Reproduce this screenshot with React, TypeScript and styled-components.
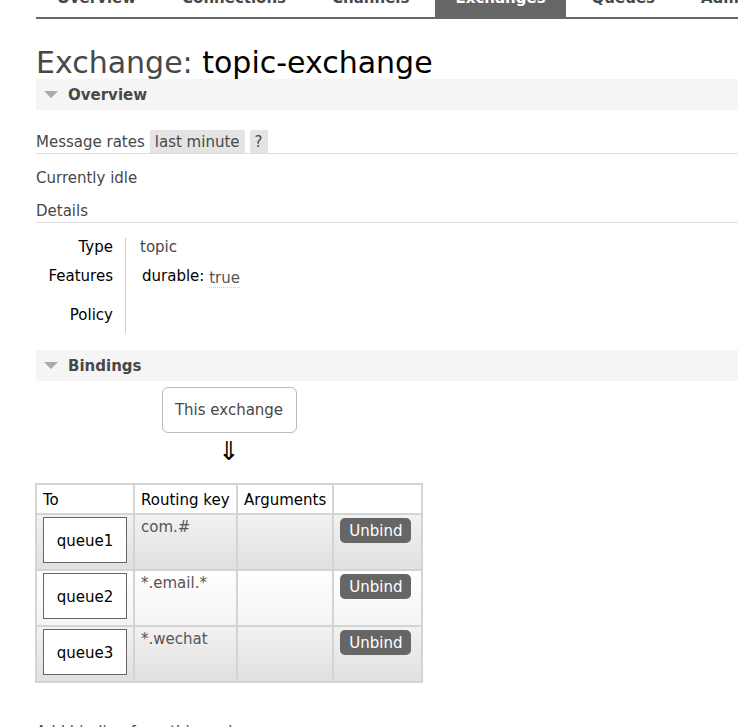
import styled, { createGlobalStyle } from "styled-components"

const GlobalStyle = createGlobalStyle`
  html, body {
    margin: 0;
    padding: 0;
    background: #fff;
  }
  body {
    font-family: "DejaVu Sans", Verdana, sans-serif;
    color: #484848;
    overflow: hidden;
  }
`

type Binding = {
    queue: string;
    routingKey: string;
}

const bindings: Binding[] = [
    { queue: "queue1", routingKey: "com.#" },
    { queue: "queue2", routingKey: "*.email.*" },
    { queue: "queue3", routingKey: "*.wechat" },
]

const tabs = ["Overview", "Connections", "Channels", "Exchanges", "Queues", "Admin"]

export default function App() {
    return (
        <>
            <GlobalStyle />
            <Page>
                <Menu>
                    {tabs.map((t) => (
                        <Tab key={t} $active={t === "Exchanges"}>{t}</Tab>
                    ))}
                </Menu>

                <Title>
                    Exchange: <b>topic-exchange</b>
                </Title>

                <SectionHeader>
                    <Caret />
                    Overview
                </SectionHeader>
                <SectionBody>
                    <SubHeading>
                        Message rates
                        <Pill>last minute</Pill>
                        <Pill>?</Pill>
                    </SubHeading>
                    <Idle>Currently idle</Idle>
                    <SubHeading $plain>Details</SubHeading>
                    <Facts>
                        <tbody>
                            <tr>
                                <FactLabel $h={18}>Type</FactLabel>
                                <FactValue $h={18}>topic</FactValue>
                            </tr>
                            <tr>
                                <FactLabel $h={40}>Features</FactLabel>
                                <FactValue $h={40}>
                                    <Feature>durable:</Feature> <Abbr>true</Abbr>
                                </FactValue>
                            </tr>
                            <tr>
                                <FactLabel $h={37}>Policy</FactLabel>
                                <FactValue $h={37}></FactValue>
                            </tr>
                        </tbody>
                    </Facts>
                </SectionBody>

                <SectionHeader>
                    <Caret />
                    Bindings
                </SectionHeader>
                <BindingsBody>
                    <Source>
                        <ExchangeBox>This exchange</ExchangeBox>
                        <Arrow>⇓</Arrow>
                    </Source>
                    <List>
                        <thead>
                            <tr>
                                <Th>To</Th>
                                <Th>Routing key</Th>
                                <Th>Arguments</Th>
                                <Th></Th>
                            </tr>
                        </thead>
                        <tbody>
                            {bindings.map((b, i) => (
                                <Row key={b.queue} $alt={i % 2 === 1}>
                                    <Td $first>
                                        <QueueBox>{b.queue}</QueueBox>
                                    </Td>
                                    <Td>{b.routingKey}</Td>
                                    <Td></Td>
                                    <Td>
                                        <Unbind>Unbind</Unbind>
                                    </Td>
                                </Row>
                            ))}
                        </tbody>
                    </List>
                    <AddLink>Add binding from this exchange</AddLink>
                </BindingsBody>
            </Page>
        </>
    )
}

const Page = styled.div`
  padding-left: 36px;
  margin-top: -15px;
`

const Menu = styled.ul`
  display: flex;
  list-style: none;
  margin: 0;
  padding: 0 0 0 1px;
  border-bottom: 2px solid #666;
  white-space: nowrap;
  overflow: hidden;
`

const Tab = styled.li<{ $active?: boolean }>`
  flex-shrink: 0;
  padding: 4px 20px 10px;
  margin-right: 6px;
  font-size: 15px;
  font-weight: bold;
  color: ${(p) => (p.$active ? "#fff" : "#484848")};
  background: ${(p) => (p.$active ? "#666" : "transparent")};
`

const Title = styled.h1`
  margin: 27px 0 0;
  font-size: 30px;
  font-weight: normal;
  color: #484848;
  line-height: 33px;
  b {
    font-weight: normal;
    color: #000;
  }
`

const SectionHeader = styled.h2`
  display: flex;
  align-items: center;
  margin: 0;
  height: 31px;
  padding-left: 8px;
  background: #f5f5f5;
  font-size: 15px;
  font-weight: bold;
  color: #484848;
`

const Caret = styled.span`
  width: 0;
  height: 0;
  margin-right: 10px;
  border-left: 7px solid transparent;
  border-right: 7px solid transparent;
  border-top: 7px solid #aaa;
`

const SectionBody = styled.div`
  padding: 20px 0 17px;
`

const SubHeading = styled.div<{ $plain?: boolean }>`
  display: flex;
  align-items: center;
  gap: 5px;
  height: 23px;
  font-size: 15px;
  border-bottom: 1px solid #ddd;
  margin-top: ${(p) => (p.$plain ? "12px" : "0")};
`

const Pill = styled.span`
  display: inline-block;
  background: #e4e4e4;
  padding: 2px 5px 0;
  height: 21px;
  line-height: 21px;
`

const Idle = styled.p`
  margin: 15px 0 0;
  font-size: 15px;
`

const Facts = styled.table`
  border-collapse: collapse;
  margin-top: 15px;
  font-size: 15px;
`

const FactLabel = styled.th<{ $h: number }>`
  width: 77px;
  height: ${(p) => p.$h}px;
  text-align: right;
  font-weight: normal;
  color: #000;
  padding: 0 12px 0 0;
  border-right: 1px solid #ccc;
  vertical-align: middle;
`

const FactValue = styled.td<{ $h: number }>`
  height: ${(p) => p.$h}px;
  padding: 0 0 0 14px;
  color: #484848;
  vertical-align: middle;
`

const Feature = styled.span`
  color: #000;
  padding-left: 2px;
`

const Abbr = styled.span`
  border-bottom: 1px dotted #ccc;
  color: #555;
  position: relative;
  top: 2px;
`

const BindingsBody = styled.div`
  padding-top: 6px;
`

const Source = styled.div`
  display: flex;
  flex-direction: column;
  align-items: center;
  width: 386px;
`

const ExchangeBox = styled.div`
  box-sizing: border-box;
  width: 135px;
  height: 46px;
  line-height: 44px;
  text-align: center;
  border: 1px solid #bbb;
  border-radius: 6px;
  font-size: 15px;
`

const Arrow = styled.div`
  font-size: 26px;
  line-height: 36px;
  color: #000;
`

const List = styled.table`
  margin-top: 14px;
  margin-left: -1px;
  border-collapse: collapse;
  font-size: 15px;
`

const Th = styled.th`
  text-align: left;
  font-weight: normal;
  color: #000;
  height: 26px;
  padding: 2px 6px 0;
  border: 2px solid #d4d4d4;
  background: #fff;
  &:nth-child(1) { width: 84px; }
  &:nth-child(2) { width: 89px; }
  &:nth-child(3) { width: 82px; }
  &:nth-child(4) { width: 75px; }
`

const Row = styled.tr<{ $alt?: boolean }>`
  background: ${(p) =>
      p.$alt
          ? "linear-gradient(#ffffff, #f4f4f4)"
          : "linear-gradient(#f2f2f2, #e0e0e0)"};
`

const Td = styled.td<{ $first?: boolean }>`
  border: 2px solid #d4d4d4;
  vertical-align: top;
  height: 48px;
  padding: ${(p) => (p.$first ? "2px 6px" : "3px 6px")};
  color: #555;
`

const QueueBox = styled.div`
  box-sizing: border-box;
  width: 84px;
  height: 46px;
  line-height: 46px;
  text-align: center;
  background: #fff;
  border: 1px solid #666;
  color: #000;
`

const Unbind = styled.button`
  font-family: inherit;
  font-size: 15px;
  color: #fff;
  background: #666;
  border: none;
  border-radius: 5px;
  padding: 0 9px;
  height: 25px;
`

const AddLink = styled.p`
  margin: 40px 0 0;
  font-size: 15px;
  color: #484848;
`
